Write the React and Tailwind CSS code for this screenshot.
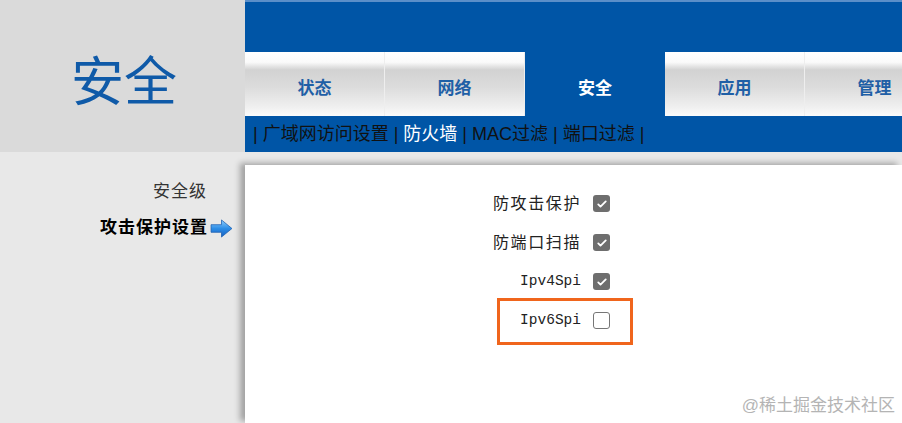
import React from 'react';

const cjk = { fontFamily: '"Liberation Serif", "Noto Sans CJK SC", serif' };
const sans = { fontFamily: '"Liberation Sans", "Noto Sans CJK SC", sans-serif' };

const tabs = ['状态', '网络', '安全', '应用', '管理'];

const Check = ({ checked }) =>
  checked ? (
    <span className="flex h-[17px] w-[17px] items-center justify-center rounded-[3px] bg-[#6e6e6e]">
      <svg viewBox="0 0 16 16" className="h-3 w-3">
        <path d="M3 8.5l3 3 7-7" fill="none" stroke="#fff" strokeWidth="2.4" strokeLinecap="round" strokeLinejoin="round" />
      </svg>
    </span>
  ) : (
    <span className="h-[17px] w-[17px] rounded-[3px] border border-[#767676] bg-white" />
  );

const Arrow = () => (
  <svg viewBox="0 0 24 20" className="h-[19px] w-[23px]">
    <defs>
      <linearGradient id="arr" x1="0" y1="0" x2="0" y2="1">
        <stop offset="0" stopColor="#8fd0ff" />
        <stop offset="0.5" stopColor="#2d8de6" />
        <stop offset="1" stopColor="#1660c0" />
      </linearGradient>
    </defs>
    <path d="M1 6h11V1l11 9-11 9v-5H1z" fill="url(#arr)" stroke="#1a5eb0" strokeWidth="0.8" />
  </svg>
);

export default function App() {
  const rows = [
    { label: '防攻击保护', checked: true, mono: false },
    { label: '防端口扫描', checked: true, mono: false },
    { label: 'Ipv4Spi', checked: true, mono: true },
    { label: 'Ipv6Spi', checked: false, mono: true },
  ];

  return (
    <div className="h-[423px] w-[902px] overflow-hidden bg-[#e8e8e8]" style={sans}>
      {/* header */}
      <div className="flex h-[152px]">
        <div className="flex w-[245px] shrink-0 items-center justify-center bg-[#dadada] pt-[14px] pl-[3px]">
          <span className="text-[53px] leading-none text-[#0f5aa8]" style={cjk}>安全</span>
        </div>
        <div className="flex flex-1 flex-col overflow-hidden bg-[#0055a6]">
          <div className="h-[2px] bg-[#5b8fc9]" />
          <div className="h-[50px]" />
          <div className="flex h-[64px]">
            {tabs.map((t) =>
              t === '安全' ? (
                <div key={t} className="flex w-[140px] shrink-0 items-center justify-center pt-[9px] text-[17px] font-bold text-white" style={cjk}>
                  {t}
                </div>
              ) : (
                <div
                  key={t}
                  className="flex w-[140px] shrink-0 items-center justify-center border-r border-[#eeeeee] bg-[linear-gradient(to_bottom,#ffffff_0%,#fafafa_16%,#d2d2d2_28%,#dcdcdc_55%,#efefef_85%,#fbfbfb_100%)] pt-[9px] text-[17px] font-bold text-[#1f5fa6]"
                  style={cjk}
                >
                  {t}
                </div>
              )
            )}
          </div>
          <div className="flex h-[36px] items-center pl-[8px] text-[18px] text-[#111]" style={sans}>
            <span>|&nbsp;广域网访问设置&nbsp;|&nbsp;</span>
            <span className="text-white">防火墙</span>
            <span>&nbsp;|&nbsp;MAC过滤&nbsp;|&nbsp;端口过滤&nbsp;|</span>
          </div>
        </div>
      </div>

      {/* body */}
      <div className="flex h-[271px]">
        <div className="w-[245px] shrink-0 pr-[12px] pt-[29px] text-right">
          <div className="pr-[26px] text-[17px] leading-[22px] tracking-[1px] text-[#333]" style={cjk}>安全级</div>
          <div className="mt-[14px] flex items-center justify-end gap-[2px] text-[17px] font-bold leading-[22px] tracking-[1px] text-black" style={cjk}>
            <span>攻击保护设置</span>
            <Arrow />
          </div>
        </div>
        <div className="relative mt-[13px] flex-1 bg-white shadow-[-5px_-2px_6px_rgba(0,0,0,0.3)]">
          <div className="flex w-[365px] flex-col pt-[19px]">
            {rows.map((r) => (
              <div key={r.label} className="flex h-[39px] items-center justify-end gap-[12px]">
                <span
                  className={r.mono ? 'text-[14.5px] text-[#222]' : 'text-[16px] tracking-[1.6px] text-[#222]'}
                  style={r.mono ? { fontFamily: '"Liberation Mono", monospace' } : cjk}
                >
                  {r.label}
                </span>
                <Check checked={r.checked} />
              </div>
            ))}
          </div>
          <div className="absolute left-[252px] top-[133px] h-[47px] w-[136px] border-[3px] border-[#f0651c]" />
          <div className="absolute bottom-[5px] right-[7px] text-[17px] text-[#b4b4b4]" style={sans}>@稀土掘金技术社区</div>
        </div>
      </div>
    </div>
  );
}
